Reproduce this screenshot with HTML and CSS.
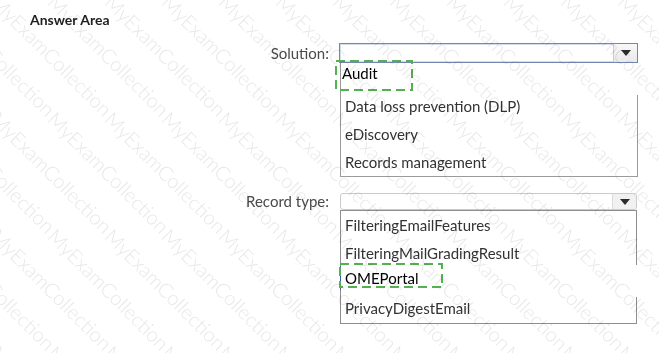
FILE: index.html
```html
<!DOCTYPE html>
<html lang="en">
<head>
<meta charset="utf-8">
<title>Answer Area</title>
<link rel="stylesheet" href="styles.css">
</head>
<body>
<div class="page">
  <h2 class="title">Answer Area</h2>

  <div class="row row-solution">
    <span class="label label-solution">Solution:</span>
    <div class="combo combo-solution">
      <div class="select select-active">
        <span class="arrow-btn"><svg width="10" height="6" viewBox="0 0 10 6"><path d="M0 0H10L5 6Z" fill="#2b2b2b"/></svg></span>
      </div>
      <ul class="list list-solution">
        <li class="item item-audit">Audit<span class="mark mark-audit"><svg width="78" height="31" viewBox="0 0 78 31"><rect x="1" y="1" width="76" height="29" fill="none" stroke="#55b04f" stroke-width="2" stroke-dasharray="9 5"/></svg></span></li>
        <li class="item">Data loss prevention (DLP)</li>
        <li class="item">eDiscovery</li>
        <li class="item">Records management</li>
      </ul>
    </div>
  </div>

  <div class="row row-record">
    <span class="label label-record">Record type:</span>
    <div class="combo combo-record">
      <div class="select select-plain">
        <span class="arrow-btn arrow-plain"><svg width="10" height="6" viewBox="0 0 10 6"><path d="M0 0H10L5 6Z" fill="#2b2b2b"/></svg></span>
      </div>
      <ul class="list list-record">
        <li class="item item-r1">FilteringEmailFeatures</li>
        <li class="item item-r2">FilteringMailGradingResult</li>
        <li class="item item-r3">OMEPortal<span class="mark mark-ome"><svg width="104" height="25" viewBox="0 0 104 25"><rect x="1" y="1" width="102" height="23" fill="none" stroke="#55b04f" stroke-width="2" stroke-dasharray="9 5"/></svg></span></li>
        <li class="item item-r4">PrivacyDigestEmail</li>
      </ul>
    </div>
  </div>

  <div class="watermark" aria-hidden="true">
    <div class="wm-grid">
      <span>MyExamCollection</span><span>MyExamCollection</span><span>MyExamCollection</span><span>MyExamCollection</span><span>MyExamCollection</span><span>MyExamCollection</span><span>MyExamCollection</span><span>MyExamCollection</span><span>MyExamCollection</span><span>MyExamCollection</span><span>MyExamCollection</span><span>MyExamCollection</span><span>MyExamCollection</span><span>MyExamCollection</span>
      <span>MyExamCollection</span><span>MyExamCollection</span><span>MyExamCollection</span><span>MyExamCollection</span><span>MyExamCollection</span><span>MyExamCollection</span><span>MyExamCollection</span><span>MyExamCollection</span><span>MyExamCollection</span><span>MyExamCollection</span><span>MyExamCollection</span><span>MyExamCollection</span><span>MyExamCollection</span><span>MyExamCollection</span>
      <span>MyExamCollection</span><span>MyExamCollection</span><span>MyExamCollection</span><span>MyExamCollection</span><span>MyExamCollection</span><span>MyExamCollection</span><span>MyExamCollection</span><span>MyExamCollection</span><span>MyExamCollection</span><span>MyExamCollection</span><span>MyExamCollection</span><span>MyExamCollection</span><span>MyExamCollection</span><span>MyExamCollection</span>
      <span>MyExamCollection</span><span>MyExamCollection</span><span>MyExamCollection</span><span>MyExamCollection</span><span>MyExamCollection</span><span>MyExamCollection</span><span>MyExamCollection</span><span>MyExamCollection</span><span>MyExamCollection</span><span>MyExamCollection</span><span>MyExamCollection</span><span>MyExamCollection</span><span>MyExamCollection</span><span>MyExamCollection</span>
    </div>
  </div>
</div>
</body>
</html>
```

FILE: styles.css
```css
* { box-sizing: border-box; }

html, body {
  margin: 0;
  padding: 0;
  background: #ffffff;
}

body {
  width: 659px;
  height: 353px;
  overflow: hidden;
  font-family: Lato, "Open Sans", "Liberation Sans", sans-serif;
  color: #333;
}

.page {
  position: relative;
  height: 353px;
  padding-top: 11px;
}

.title {
  margin: 0 0 0 30px;
  font-size: 14px;
  font-weight: 700;
  line-height: 17px;
  color: #1f1f1f;
}

.row {
  display: grid;
  grid-template-columns: 329px 299px;
  column-gap: 10px;
  align-items: start;
}

.row-solution { margin-top: 15px; }
.row-record { margin-top: 16px; }

.label {
  text-align: right;
  font-size: 15px;
  color: #4a4a4a;
}

.label-solution { line-height: 20px; }
.label-record { line-height: 17px; }

.combo-record {
  margin-left: 1px;
  width: 297px;
}

.select {
  display: flex;
  justify-content: flex-end;
  background: #fff;
}

.select-active {
  height: 20px;
  border: 1px solid #7487b3;
  box-shadow: inset 0 0 0 1px #d5dcec;
}

.select-plain {
  height: 17px;
  border: 1px solid #cbcbcb;
  border-radius: 3px;
}

.arrow-btn {
  width: 24px;
  display: flex;
  align-items: center;
  justify-content: center;
  border-left: 1px solid #c9c9c9;
  background: linear-gradient(#f8f8f8, #e9e9e9);
}

.arrow-plain {
  border-left: 1px solid #dcdcdc;
  background: #f1f1f1;
  border-radius: 0 2px 2px 0;
}

.list {
  list-style: none;
  margin: 0;
  padding: 0;
  font-size: 15px;
  color: #333;
}

.list-solution {
  margin-left: 1px;
  border-left: 1px solid #9a9a9a;
  border-bottom: 1px solid #9a9a9a;
  background: linear-gradient(#9a9a9a, #9a9a9a) right bottom / 1px calc(100% - 32px) no-repeat;
}

.list-record {
  border-top: 1px solid #8e8e8e;
  border-left: 1px solid #8e8e8e;
  border-bottom: 1px solid #8e8e8e;
  background:
    linear-gradient(#8e8e8e, #8e8e8e) right top / 1px 54px no-repeat,
    linear-gradient(#8e8e8e, #8e8e8e) right bottom / 1px calc(100% - 86px) no-repeat;
}

.item {
  position: relative;
  padding-left: 4px;
  line-height: 28px;
  white-space: nowrap;
}

.item-audit {
  padding-left: 1px;
  line-height: 20px;
  margin-bottom: 9px;
  color: #000;
}

.item-r1 { line-height: 29px; }
.item-r2 { line-height: 26px; }
.item-r3 {
  line-height: 24px;
  margin-bottom: 4px;
  color: #000;
  box-shadow: -1px 0 0 #3d5f9c;
}
.item-r4 { line-height: 29px; }

.mark {
  position: absolute;
  display: block;
  line-height: 0;
}

.mark-audit { left: -6px; top: -3px; }
.mark-ome { left: -2px; top: -3px; }

.watermark {
  position: absolute;
  inset: 0;
  overflow: hidden;
  pointer-events: none;
  mix-blend-mode: multiply;
}

.wm-grid {
  display: grid;
  grid-template-columns: repeat(14, 57px);
  grid-auto-rows: 117px;
  margin-left: -112px;
  margin-top: -9px;
}

.wm-grid span {
  display: block;
  white-space: nowrap;
  font-family: Lato, "Open Sans", sans-serif;
  font-size: 20px;
  font-weight: 300;
  line-height: 20px;
  color: #e8e8e8;
  transform: rotate(45deg);
  transform-origin: 0 0;
}
```
